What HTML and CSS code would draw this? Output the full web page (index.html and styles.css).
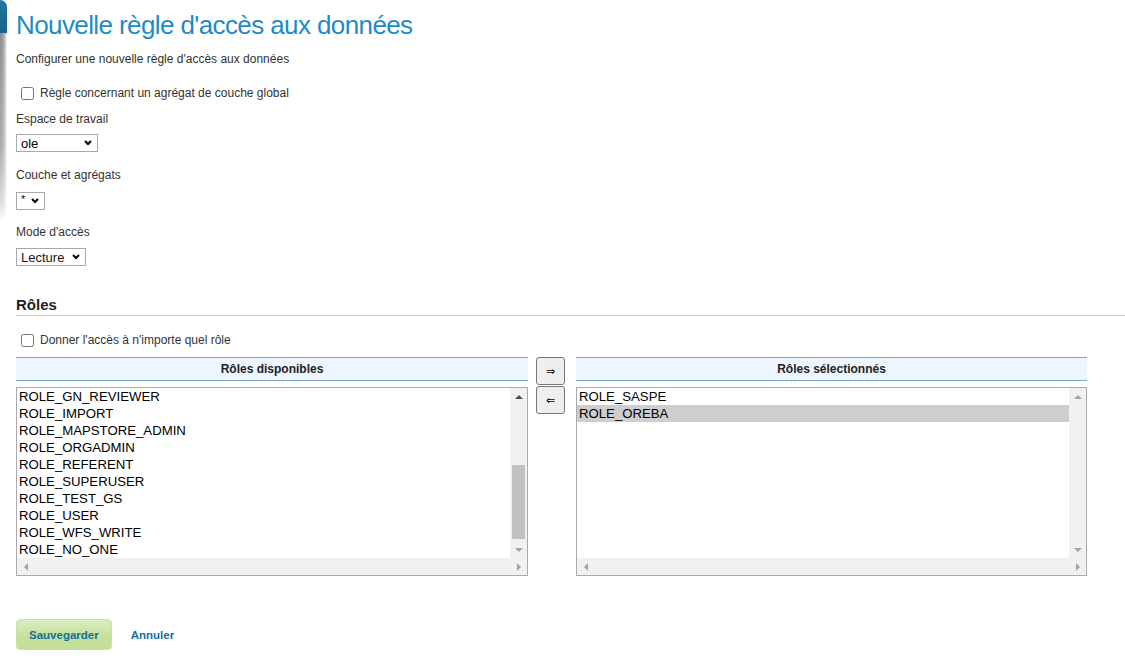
FILE: index.html
```html
<!DOCTYPE html>
<html lang="fr">
<head>
<meta charset="utf-8">
<title>Nouvelle règle d'accès aux données</title>
<link rel="stylesheet" href="styles.css">
</head>
<body>
<div class="deco"><div class="deco-top"></div><div class="deco-shadow"></div></div>
<main class="page">
  <h1 class="title">Nouvelle règle d'accès aux données</h1>
  <p class="intro">Configurer une nouvelle règle d'accès aux données</p>

  <label class="check check-global"><input type="checkbox"><span>Règle concernant un agrégat de couche global</span></label>

  <div class="field field-ws">
    <div class="label">Espace de travail</div>
    <div class="select select-ws"><span>ole</span><svg class="chev" width="8" height="6" viewBox="0 0 8 6"><polyline points="1,1 4,4 7,1" fill="none" stroke="#000" stroke-width="2"/></svg></div>
  </div>

  <div class="field field-layer">
    <div class="label">Couche et agrégats</div>
    <div class="select select-layer"><span class="star">*</span><svg class="chev" width="8" height="6" viewBox="0 0 8 6"><polyline points="1,1 4,4 7,1" fill="none" stroke="#000" stroke-width="2"/></svg></div>
  </div>

  <div class="field field-mode">
    <div class="label">Mode d'accès</div>
    <div class="select select-mode"><span>Lecture</span><svg class="chev" width="8" height="6" viewBox="0 0 8 6"><polyline points="1,1 4,4 7,1" fill="none" stroke="#000" stroke-width="2"/></svg></div>
  </div>

  <h2 class="section">Rôles</h2>

  <label class="check check-any"><input type="checkbox"><span>Donner l'accès à n'importe quel rôle</span></label>

  <div class="palette">
    <div class="pane pane-left">
      <div class="pane-head">Rôles disponibles</div>
      <div class="listbox">
        <div class="items">
          <div class="item">ROLE_GN_REVIEWER</div>
          <div class="item">ROLE_IMPORT</div>
          <div class="item">ROLE_MAPSTORE_ADMIN</div>
          <div class="item">ROLE_ORGADMIN</div>
          <div class="item">ROLE_REFERENT</div>
          <div class="item">ROLE_SUPERUSER</div>
          <div class="item">ROLE_TEST_GS</div>
          <div class="item">ROLE_USER</div>
          <div class="item">ROLE_WFS_WRITE</div>
          <div class="item">ROLE_NO_ONE</div>
        </div>
        <div class="vscroll">
          <div class="sb-btn"><i class="arr up on"></i></div>
          <div class="track"><div class="thumb thumb-left"></div></div>
          <div class="sb-btn"><i class="arr down"></i></div>
        </div>
        <div class="hscroll">
          <div class="sb-btn"><i class="arr left"></i></div>
          <div class="htrack"></div>
          <div class="sb-btn"><i class="arr right"></i></div>
        </div>
      </div>
    </div>

    <div class="moves">
      <button class="move" type="button">⇒</button>
      <button class="move" type="button">⇐</button>
    </div>

    <div class="pane pane-right">
      <div class="pane-head">Rôles sélectionnés</div>
      <div class="listbox">
        <div class="items">
          <div class="item">ROLE_SASPE</div>
          <div class="item selected">ROLE_OREBA</div>
        </div>
        <div class="vscroll">
          <div class="sb-btn"><i class="arr up"></i></div>
          <div class="track"></div>
          <div class="sb-btn"><i class="arr down"></i></div>
        </div>
        <div class="hscroll">
          <div class="sb-btn"><i class="arr left"></i></div>
          <div class="htrack"></div>
          <div class="sb-btn"><i class="arr right"></i></div>
        </div>
      </div>
    </div>
  </div>

  <div class="actions">
    <button class="save" type="button">Sauvegarder</button>
    <a class="cancel" href="#">Annuler</a>
  </div>
</main>
</body>
</html>
```

FILE: styles.css
```css
html, body {
  margin: 0;
  padding: 0;
  background: #fff;
}

body {
  font-family: "Liberation Sans", Arial, sans-serif;
  font-size: 12px;
  color: #333;
  position: relative;
}

/* left sidebar edge decoration */
.deco {
  position: absolute;
  left: 0;
  top: 0;
  width: 7px;
}
.deco-top {
  height: 33px;
  background: linear-gradient(#2277a2, #16648c);
  border-top-right-radius: 7px;
}
.deco-shadow {
  height: 188px;
  background: linear-gradient(to right, #8a8a8a, #a8a8a8 55%, #dcdcdc 85%, rgba(255,255,255,0));
  -webkit-mask-image: linear-gradient(#000, rgba(0,0,0,0.75) 60%, rgba(0,0,0,0.3) 90%, transparent);
  mask-image: linear-gradient(#000, rgba(0,0,0,0.75) 60%, rgba(0,0,0,0.3) 90%, transparent);
}

.page {
  padding-left: 16px;
}

.title {
  margin: 10px 0 0;
  font-weight: normal;
  font-size: 26px;
  line-height: 30px;
  letter-spacing: -0.6px;
  color: #1f8bc6;
}

.intro {
  margin: 11px 0 0;
  line-height: 16px;
}

.check {
  display: flex;
  align-items: center;
  gap: 6px;
  line-height: 16px;
  padding-left: 5px;
}
.check input {
  margin: 0;
  width: 13px;
  height: 13px;
}
.check-global { margin-top: 18px; }
.check-any { margin-top: 16px; }

.label {
  line-height: 16px;
}
.field-ws { margin-top: 10px; }
.field-layer { margin-top: 15px; }
.field-mode { margin-top: 14px; }

.select {
  display: flex;
  align-items: center;
  justify-content: space-between;
  box-sizing: border-box;
  height: 18px;
  margin-top: 7px;
  padding: 0 5px 0 4px;
  border: 1px solid #a9a9a9;
  background: #fff;
  font-size: 13px;
  color: #000;
}
.select-ws { width: 82px; }
.select-layer { width: 29px; margin-top: 9px; }
.select-mode { width: 70px; margin-top: 8px; color: #2a1410; }
.star { font-size: 11px; position: relative; top: -2px; }
.chev { display: block; }

.section {
  margin: 30px 0 0;
  padding-bottom: 1px;
  font-size: 15px;
  line-height: 18px;
  color: #222;
  border-bottom: 1px solid #bcdc8c;
}

.palette {
  display: flex;
  align-items: flex-start;
  margin-top: 9px;
}

.pane-left { width: 512px; }
.pane-right { width: 511px; }

.pane-head {
  height: 22px;
  line-height: 22px;
  border-top: 1px solid #7aa3cd;
  border-bottom: 1px solid #7aa3cd;
  background: #edf5ff;
  text-align: center;
  font-weight: bold;
  color: #222;
}

.listbox {
  margin-top: 6px;
  border: 1px solid #aaa;
  display: grid;
  grid-template-columns: 1fr 17px;
  grid-template-rows: 170px 17px;
  background: #fff;
}

.items {
  font-size: 13.2px;
  color: #000;
  overflow: hidden;
}
.item {
  height: 17px;
  line-height: 17px;
  padding-left: 2px;
  white-space: nowrap;
}
.item.selected {
  background: #cecece;
}

.vscroll {
  display: flex;
  flex-direction: column;
  background: #f1f1f1;
}
.sb-btn {
  width: 17px;
  height: 17px;
  flex: none;
  display: flex;
  align-items: center;
  justify-content: center;
}
.track {
  flex: 1;
}
.thumb {
  margin: 0 2px;
  background: #c1c1c1;
}
.thumb-left {
  margin-top: 60px;
  height: 74px;
}

.hscroll {
  grid-column: 1 / span 2;
  display: flex;
  background: #f1f1f1;
}
.htrack { flex: 1; }

.arr {
  display: block;
  width: 0;
  height: 0;
}
.arr.up {
  border-left: 4px solid transparent;
  border-right: 4px solid transparent;
  border-bottom: 4px solid #a3a3a3;
}
.arr.down {
  border-left: 4px solid transparent;
  border-right: 4px solid transparent;
  border-top: 4px solid #a3a3a3;
}
.arr.left {
  border-top: 4px solid transparent;
  border-bottom: 4px solid transparent;
  border-right: 4px solid #a3a3a3;
}
.arr.right {
  border-top: 4px solid transparent;
  border-bottom: 4px solid transparent;
  border-left: 4px solid #a3a3a3;
}
.arr.up.on { border-bottom-color: #505050; }

.moves {
  display: flex;
  flex-direction: column;
  gap: 1px;
  margin: 0 11px 0 8px;
}
.move {
  width: 29px;
  height: 28px;
  padding: 0;
  border: 1px solid #767676;
  border-radius: 3px;
  background: #efefef;
  font-family: "DejaVu Sans", sans-serif;
  font-size: 11px;
  color: #000;
}

.actions {
  display: flex;
  align-items: center;
  gap: 19px;
  margin-top: 43px;
}
.save {
  height: 31px;
  padding: 0 12px;
  border: 1px solid #c8e2a2;
  border-radius: 4px;
  background: linear-gradient(#dcedc3, #c5e09b 55%, #c2de97);
  font-family: "Liberation Sans", Arial, sans-serif;
  font-weight: bold;
  font-size: 11.5px;
  color: #136e96;
}
.cancel {
  font-weight: bold;
  font-size: 11.5px;
  color: #146fa0;
  text-decoration: none;
}
```
